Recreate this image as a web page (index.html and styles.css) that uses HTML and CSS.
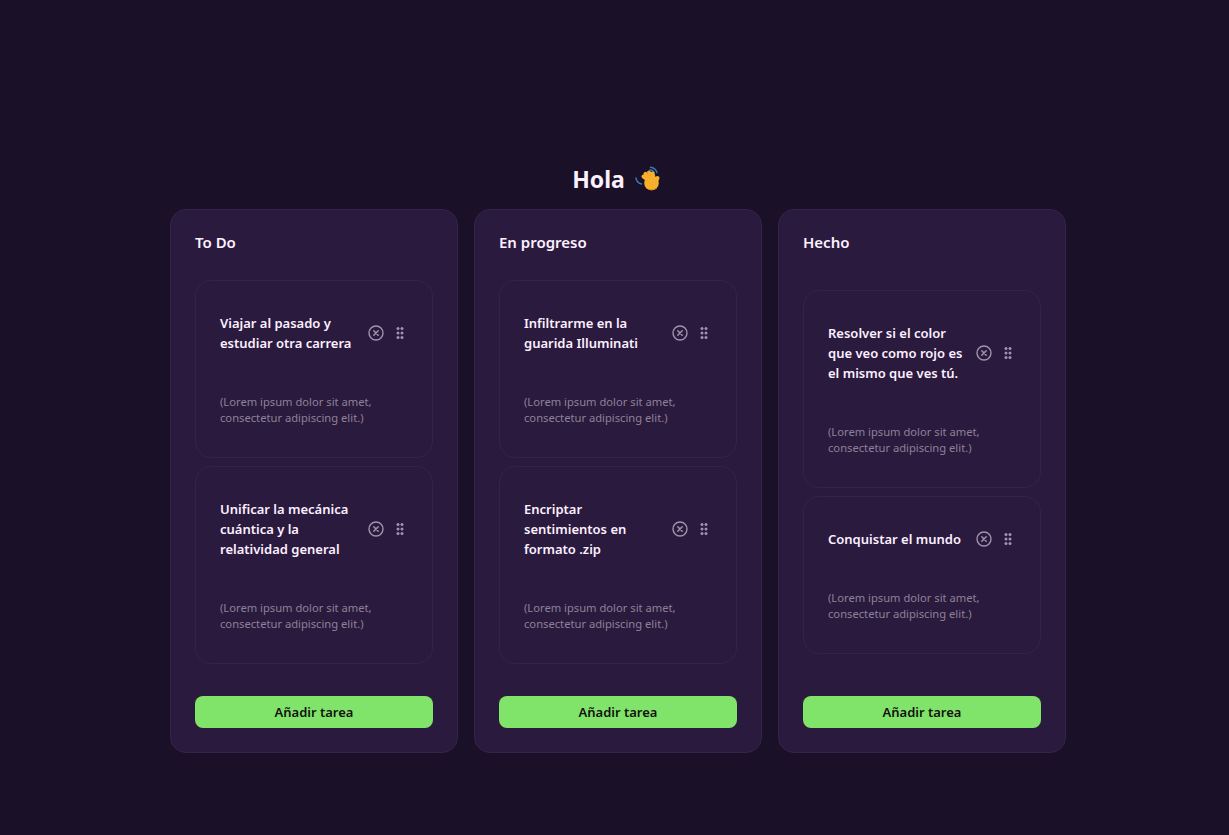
FILE: index.html
```html
<!DOCTYPE html>
<html lang="es">
<head>
    <meta charset="UTF-8">
    <meta name="viewport" content="width=device-width, initial-scale=1.0">
    <title>Tablero</title>
    <link rel="stylesheet" href="styles.css">
</head>
<body>
    <svg class="sprites" width="0" height="0">
        <symbol id="icon-close" viewBox="0 0 16 16">
            <circle cx="8" cy="8" r="7" fill="none" stroke="currentColor" stroke-width="1.4"/>
            <path d="M5.8 5.800l4.400 4.400M10.200 5.800l-4.400 4.400" fill="none" stroke="currentColor" stroke-width="1.500" stroke-linecap="round"/>
        </symbol>
        <symbol id="icon-grip" viewBox="0 0 16 16">
            <g fill="currentColor">
                <circle cx="6" cy="3.500" r="1.500"/><circle cx="10" cy="3.500" r="1.500"/>
                <circle cx="6" cy="8" r="1.500"/><circle cx="10" cy="8" r="1.500"/>
                <circle cx="6" cy="12.500" r="1.500"/><circle cx="10" cy="12.500" r="1.500"/>
            </g>
        </symbol>
    </svg>

    <h1 class="greeting">Hola
        <svg class="wave" viewBox="0 0 26 26" width="26" height="26">
            <g fill="none" stroke="#3a78b0" stroke-width="1.500" stroke-linecap="round">
                <path d="M1 12c.2 2.800 2 5 5.500 6"/>
                <path d="M15.500 1.200c3 .3 5.500 2.300 6.500 5.300"/>
                <path d="M15 3.800c2 .2 3.500 1.300 4.300 3"/>
            </g>
            <g fill="none" stroke="#f6b02c" stroke-width="4" stroke-linecap="round">
                <path d="M15 15l-6.500-4.500"/>
                <path d="M15 14l-4.500-6.200"/>
                <path d="M17 13l-3-6.500"/>
                <path d="M19 13l-1.500-5.500"/>
                <path d="M20 17l2.500-5"/>
            </g>
            <circle cx="16.500" cy="17" r="7.300" fill="#f6b02c"/>
            <path d="M21.500 22c-2 1.800-4.800 2.300-7.300 1.400" fill="none" stroke="#dc8f16" stroke-width="1" stroke-linecap="round"/>
        </svg>
    </h1>

    <main class="board">
        <section class="column">
            <h2 class="column-title">To Do</h2>
            <div class="task-list">
                <article class="task">
                    <div class="task-head">
                        <h3 class="task-title">Viajar al pasado y estudiar otra carrera</h3>
                        <svg class="icon"><use href="#icon-close"/></svg>
                        <svg class="icon"><use href="#icon-grip"/></svg>
                    </div>
                    <p class="task-text">(Lorem ipsum dolor sit amet, consectetur adipiscing elit.)</p>
                </article>
                <article class="task">
                    <div class="task-head">
                        <h3 class="task-title">Unificar la mecánica cuántica y la relatividad general</h3>
                        <svg class="icon"><use href="#icon-close"/></svg>
                        <svg class="icon"><use href="#icon-grip"/></svg>
                    </div>
                    <p class="task-text">(Lorem ipsum dolor sit amet, consectetur adipiscing elit.)</p>
                </article>
            </div>
            <button class="add-btn">Añadir tarea</button>
        </section>

        <section class="column">
            <h2 class="column-title">En progreso</h2>
            <div class="task-list">
                <article class="task">
                    <div class="task-head">
                        <h3 class="task-title">Infiltrarme en la guarida Illuminati</h3>
                        <svg class="icon"><use href="#icon-close"/></svg>
                        <svg class="icon"><use href="#icon-grip"/></svg>
                    </div>
                    <p class="task-text">(Lorem ipsum dolor sit amet, consectetur adipiscing elit.)</p>
                </article>
                <article class="task">
                    <div class="task-head">
                        <h3 class="task-title">Encriptar sentimientos en formato .zip</h3>
                        <svg class="icon"><use href="#icon-close"/></svg>
                        <svg class="icon"><use href="#icon-grip"/></svg>
                    </div>
                    <p class="task-text">(Lorem ipsum dolor sit amet, consectetur adipiscing elit.)</p>
                </article>
            </div>
            <button class="add-btn">Añadir tarea</button>
        </section>

        <section class="column">
            <h2 class="column-title">Hecho</h2>
            <div class="task-list">
                <article class="task">
                    <div class="task-head">
                        <h3 class="task-title">Resolver si el color que veo como rojo es el mismo que ves tú.</h3>
                        <svg class="icon"><use href="#icon-close"/></svg>
                        <svg class="icon"><use href="#icon-grip"/></svg>
                    </div>
                    <p class="task-text">(Lorem ipsum dolor sit amet, consectetur adipiscing elit.)</p>
                </article>
                <article class="task">
                    <div class="task-head">
                        <h3 class="task-title">Conquistar el mundo</h3>
                        <svg class="icon"><use href="#icon-close"/></svg>
                        <svg class="icon"><use href="#icon-grip"/></svg>
                    </div>
                    <p class="task-text">(Lorem ipsum dolor sit amet, consectetur adipiscing elit.)</p>
                </article>
            </div>
            <button class="add-btn">Añadir tarea</button>
        </section>
    </main>
</body>
</html>
```

FILE: styles.css
```css
body {
    font-family: "Noto Sans", "Open Sans", sans-serif;
    background-color: #1a1128;
    color: #fdf0ff;
    display: flex;
    flex-direction: column;
    align-items: center;
    min-height: 835px;
    box-sizing: border-box;
    margin: 0;
    padding: 163px 0 0 7px;
}
.sprites {
    position: absolute;
}
.greeting {
    display: flex;
    align-items: center;
    gap: 10px;
    height: 32px;
    margin: 0 3px 14px 0;
    font-size: 23px;
    line-height: 32px;
    font-weight: 700;
}
.board {
    display: flex;
    gap: 16px;
}
.column {
    display: flex;
    flex-direction: column;
    width: 288px;
    height: 544px;
    box-sizing: border-box;
    padding: 24px;
    background-color: #2a1a3e;
    border: 1px solid #34244a;
    border-radius: 16px;
}
.column-title {
    margin: 0;
    font-size: 15px;
    line-height: 16px;
    font-weight: 600;
}
.task-list {
    flex: 1;
    display: flex;
    flex-direction: column;
    justify-content: center;
    gap: 8px;
    margin-bottom: 2px;
}
.task {
    padding: 32px 24px 31px;
    border: 1px solid #332347;
    border-radius: 16px;
}
.task-head {
    display: flex;
    align-items: center;
    gap: 8px;
}
.task-title {
    flex: 1;
    margin: 0;
    font-size: 13px;
    line-height: 20px;
    font-weight: 600;
}
.icon {
    flex: none;
    width: 16px;
    height: 16px;
    color: #a193ae;
}
.task-text {
    margin: 41px 0 0;
    font-size: 11.2px;
    line-height: 16px;
    color: #8f8199;
}
.add-btn {
    flex: none;
    width: 100%;
    height: 32px;
    padding: 0;
    font-family: inherit;
    font-size: 13px;
    font-weight: 600;
    color: #14100f;
    background-color: #80e46a;
    border: none;
    border-radius: 8px;
    cursor: pointer;
}
```
